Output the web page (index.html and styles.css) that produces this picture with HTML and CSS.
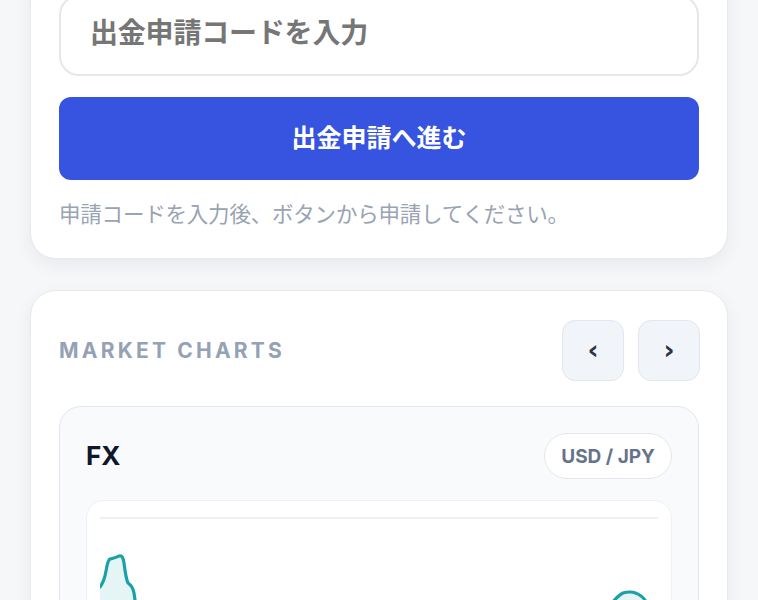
FILE: index.html
```html
<!DOCTYPE html>
<html lang="ja">
<head>
<meta charset="utf-8">
<link rel="stylesheet" href="styles.css">
</head>
<body>
<main class="page">
  <section class="card withdraw">
    <input class="code-input" type="text" placeholder="出金申請コードを入力">
    <button class="primary-btn" type="button">出金申請へ進む</button>
    <p class="hint">申請コードを入力後、ボタンから申請してください。</p>
  </section>

  <section class="card market">
    <header class="market-head">
      <h2 class="market-title">MARKET CHARTS</h2>
      <div class="nav">
        <button class="nav-btn" type="button">‹</button>
        <button class="nav-btn" type="button">›</button>
      </div>
    </header>
    <div class="chart-card">
      <div class="chart-head">
        <h3 class="chart-name">FX</h3>
        <span class="pair">USD / JPY</span>
      </div>
      <div class="chart-box">
        <svg class="chart-svg" viewBox="0 0 558 200" preserveAspectRatio="none">
          <line x1="0" y1="1" x2="558" y2="1" stroke="#eef1f5" stroke-width="2"/>
          <path d="M0 70 C3 66 5 60 6 54 C7 48 8 43 10 42 C13 41 16 41 19 39 C22 38 23 40 24 46 C25 54 26 62 28 66 C31 68 33 70 34 76 L36 90 L36 200 L0 200 Z" fill="#e5f4f5"/>
          <path d="M0 70 C3 66 5 60 6 54 C7 48 8 43 10 42 C13 41 16 41 19 39 C22 38 23 40 24 46 C25 54 26 62 28 66 C31 68 33 70 34 76 L36 90" fill="none" stroke="#1aa1a8" stroke-width="3.2" stroke-linecap="round" stroke-linejoin="round"/>
          <path d="M515 82 C519 78 522 76 527 75 C533 75 537 76 541 79 C544 81 546 84 547 88 L547 200 L515 200 Z" fill="#e5f4f5"/>
          <path d="M512 86 C516 81 519 78 523 76 C526 75 528 75 530 75 C534 75 537 76 541 79 C544 81 546 84 547 88" fill="none" stroke="#1aa1a8" stroke-width="3.2" stroke-linecap="round" stroke-linejoin="round"/>
        </svg>
      </div>
    </div>
  </section>
</main>
</body>
</html>
```

FILE: styles.css
```css
* { box-sizing: border-box; }

html, body {
  margin: 0;
  padding: 0;
  background: #f6f7f9;
  font-family: "Inter", "Noto Sans CJK JP", sans-serif;
}

.page {
  width: 698px;
  margin: -34px 0 0 30px;
  display: flex;
  flex-direction: column;
  gap: 31px;
}

.card {
  background: #ffffff;
  border: 1px solid #e6e9ee;
  border-radius: 26px;
  box-shadow: 0 6px 18px rgba(15, 23, 42, 0.06);
  padding: 28px;
}

.withdraw {
  display: flex;
  flex-direction: column;
  padding-bottom: 31px;
}

.code-input {
  height: 81px;
  width: 100%;
  border: 2px solid #e5e7eb;
  border-radius: 20px;
  padding: 0 29px 10px;
  font-family: "Noto Sans CJK JP", sans-serif;
  font-size: 28px;
  letter-spacing: -0.2px;
  font-weight: 700;
  color: #333;
  background: #fff;
  outline: none;
}

.code-input::placeholder {
  color: #767676;
}

.primary-btn {
  margin-top: 21px;
  height: 83px;
  width: 100%;
  border: none;
  border-radius: 12px;
  background: #3654e0;
  color: #ffffff;
  font-family: "Noto Sans CJK JP", sans-serif;
  font-size: 25px;
  font-weight: 700;
  padding: 0 0 6px;
}

.hint {
  margin: 19px 0 0;
  font-family: "Noto Sans CJK JP", sans-serif;
  font-size: 21.5px;
  letter-spacing: -0.2px;
  line-height: 28px;
  color: #98a3b3;
}

.market-head {
  display: flex;
  align-items: center;
  justify-content: space-between;
  height: 61px;
  margin-top: 1px;
  margin-right: -1px;
}

.market-title {
  margin: 0;
  font-size: 21px;
  font-weight: 700;
  letter-spacing: 3.2px;
  color: #95a1b4;
}

.nav {
  display: flex;
  gap: 14px;
}

.nav-btn {
  width: 62px;
  height: 61px;
  border: 1.5px solid #e2e6ee;
  border-radius: 13px;
  background: #f1f4f8;
  color: #2b3344;
  font-family: "DejaVu Sans", sans-serif;
  font-size: 27px;
  font-weight: 700;
  line-height: 1;
  padding: 0 0 3px;
}

.chart-card {
  margin-top: 25px;
  background: #f8fafc;
  border: 1.5px solid #e2e6ee;
  border-radius: 22px;
  padding: 26px 26px 26px 26px;
}

.chart-head {
  display: flex;
  align-items: center;
  justify-content: space-between;
}

.chart-name {
  margin: 0 0 2px;
  font-size: 26px;
  font-weight: 700;
  color: #0f172a;
}

.pair {
  height: 46px;
  padding: 0 16px;
  display: inline-flex;
  align-items: center;
  border: 1.5px solid #e2e6ee;
  border-radius: 999px;
  background: #fff;
  color: #66748b;
  font-size: 19px;
  font-weight: 700;
}

.chart-box {
  margin-top: 21px;
  background: #ffffff;
  border: 1.5px solid #eef1f5;
  border-radius: 18px;
  padding: 16px 13px;
  height: 260px;
}

.chart-svg {
  display: block;
  width: 100%;
  height: 200px;
}
```
